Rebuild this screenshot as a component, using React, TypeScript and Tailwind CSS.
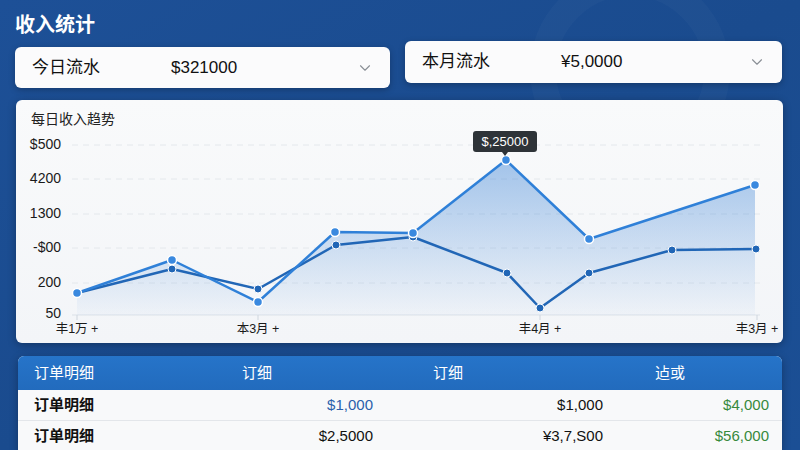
import { ChevronDown } from "lucide-react";

const font = { fontFamily: '"Liberation Sans", "Noto Sans CJK SC", sans-serif' };

const upper = [
  [77, 293], [172, 260], [258, 302], [335, 232], [413, 233], [506, 160], [589, 239], [755, 185],
];
const lower = [
  [77, 293], [172, 269], [258, 289], [336, 245], [413, 237], [507, 273], [540, 308], [589, 273], [672, 250], [756, 249],
];

const yLabels = [
  ["$500", 145], ["4200", 179], ["1300", 214], ["-$00", 248], ["200", 283], ["50", 314],
];
const xLabels = [
  ["丰1万 +", 77], ["本3月 +", 258], ["丰4月 +", 540], ["丰3月 +", 757],
];

const toPath = (pts) => pts.map((p, i) => `${i ? "L" : "M"}${p[0]} ${p[1]}`).join(" ");

const rows = [
  { name: "订单明细", a: "$1,000", aBlue: true, b: "$1,000", c: "$4,000" },
  { name: "订单明细", a: "$2,5000", aBlue: false, b: "¥3,7,S00", c: "$56,000" },
];

const Select = ({ label, value, className }) => (
  <div className={`flex items-center bg-[#fbfbfc] rounded-[6px] shadow-[0_2px_6px_rgba(0,0,0,0.25)] ${className}`}>
    <span className="w-[156px] pl-[17px] text-[17px] text-[#111]">{label}</span>
    <span className="flex-1 text-[17px] text-[#111]">{value}</span>
    <ChevronDown className="w-[18px] h-[18px] mr-[16px] text-[#8a8f96]" strokeWidth={1.5} />
  </div>
);

const App = () => {
  return (
    <div
      style={font}
      className="relative w-[800px] h-[450px] overflow-hidden bg-gradient-to-br from-[#1d5097] via-[#1a4b8e] to-[#1b4f95] pl-[15px] pt-[12px]"
    >
      <div className="absolute right-[70px] top-[-30px] w-[200px] h-[200px] rounded-full border-[26px] border-white/[0.025]" />
      <h1 className="relative text-[20px] leading-[27px] font-bold text-white">收入统计</h1>

      <div className="relative flex items-start gap-[15px] mt-[2px]">
        <Select label="今日流水" value="$321000" className="w-[375px] h-[41px] mt-[6px]" />
        <Select label="本月流水" value="¥5,0000" className="w-[377px] h-[42px]" />
      </div>

      <div className="relative ml-[1px] mt-[12px] w-[767px] h-[243px] rounded-[6px] bg-gradient-to-b from-[#f9fafb] to-[#f3f5f8] shadow-[0_2px_8px_rgba(0,0,0,0.3)]">
        <div className="h-[36px] pl-[15px] pt-[9px] text-[14px] text-[#222]">每日收入趋势</div>
        <svg width="767" height="207" viewBox="16 136 767 207" className="block">
          <defs>
            <linearGradient id="area" x1="0" y1="160" x2="0" y2="315" gradientUnits="userSpaceOnUse">
              <stop offset="0" stopColor="#3a82d6" stopOpacity="0.45" />
              <stop offset="1" stopColor="#3a82d6" stopOpacity="0.03" />
            </linearGradient>
          </defs>
          {yLabels.slice(0, 5).map(([, y]) => (
            <line key={y} x1="72" x2="760" y1={y} y2={y} stroke="#e4e8ec" strokeDasharray="6 5" />
          ))}
          <line x1="72" x2="760" y1="315" y2="315" stroke="#dbe1e8" />
          {xLabels.map(([, x]) => (
            <line key={x} x1={x} x2={x} y1="315" y2="320" stroke="#cfd6de" />
          ))}
          {yLabels.map(([t, y]) => (
            <text key={t} x="61" y={y} textAnchor="end" dominantBaseline="middle" fontSize="14" fill="#1a1a1a">
              {t}
            </text>
          ))}
          {xLabels.map(([t, x]) => (
            <text key={t} x={x} y="330" textAnchor="middle" dominantBaseline="middle" fontSize="12.5" fill="#1a1a1a">
              {t}
            </text>
          ))}
          <path d={`${toPath(upper)} L755 315 L77 315 Z`} fill="url(#area)" />
          <path d={toPath(lower)} fill="none" stroke="#2166b6" strokeWidth="2.5" strokeLinejoin="round" />
          <path d={toPath(upper)} fill="none" stroke="#2f80d8" strokeWidth="2.5" strokeLinejoin="round" />
          {lower.map(([x, y], i) => (
            <circle key={"l" + i} cx={x} cy={y} r="4" fill="#2166b6" stroke="#fff" strokeWidth="1" />
          ))}
          {upper.map(([x, y], i) => (
            <circle key={"u" + i} cx={x} cy={y} r="4.5" fill="#3a89df" stroke="#fff" strokeWidth="1.5" />
          ))}
        </svg>
        <div className="absolute left-[457px] top-[31px] w-[64px] h-[21px] rounded-[3px] bg-[#2e3338] text-white text-[13px] leading-[21px] text-center">
          $,25000
          <div className="absolute left-[29px] top-[21px] w-0 h-0 border-x-[3px] border-x-transparent border-t-[4px] border-t-[#2e3338]" />
        </div>
      </div>

      <div className="relative ml-[3px] mt-[13px] w-[764px] rounded-t-[6px] overflow-hidden bg-[#f8f9fa] shadow-[0_2px_8px_rgba(0,0,0,0.3)]">
        <div className="grid grid-cols-[206px_149px_230px_1fr] h-[34px] items-center bg-gradient-to-b from-[#2674c9] to-[#226bbd] text-white text-[15px]">
          <span className="pl-[16px]">订单明细</span>
          <span className="pl-[18px]">订细</span>
          <span className="pl-[60px]">订细</span>
          <span className="pl-[52px]">迠或</span>
        </div>
        {rows.map((r, i) => (
          <div
            key={i}
            className="grid grid-cols-[206px_149px_230px_1fr] h-[31px] items-center border-b border-[#e3e6ea] text-[15px]"
          >
            <span className="pl-[16px] font-bold text-[#111]">{r.name}</span>
            <span className={`text-right ${r.aBlue ? "text-[#2b5fab]" : "text-[#111]"}`}>{r.a}</span>
            <span className="text-right text-[#111]">{r.b}</span>
            <span className="text-right pr-[13px] text-[#37893c]">{r.c}</span>
          </div>
        ))}
      </div>
    </div>
  );
};

export default App;
